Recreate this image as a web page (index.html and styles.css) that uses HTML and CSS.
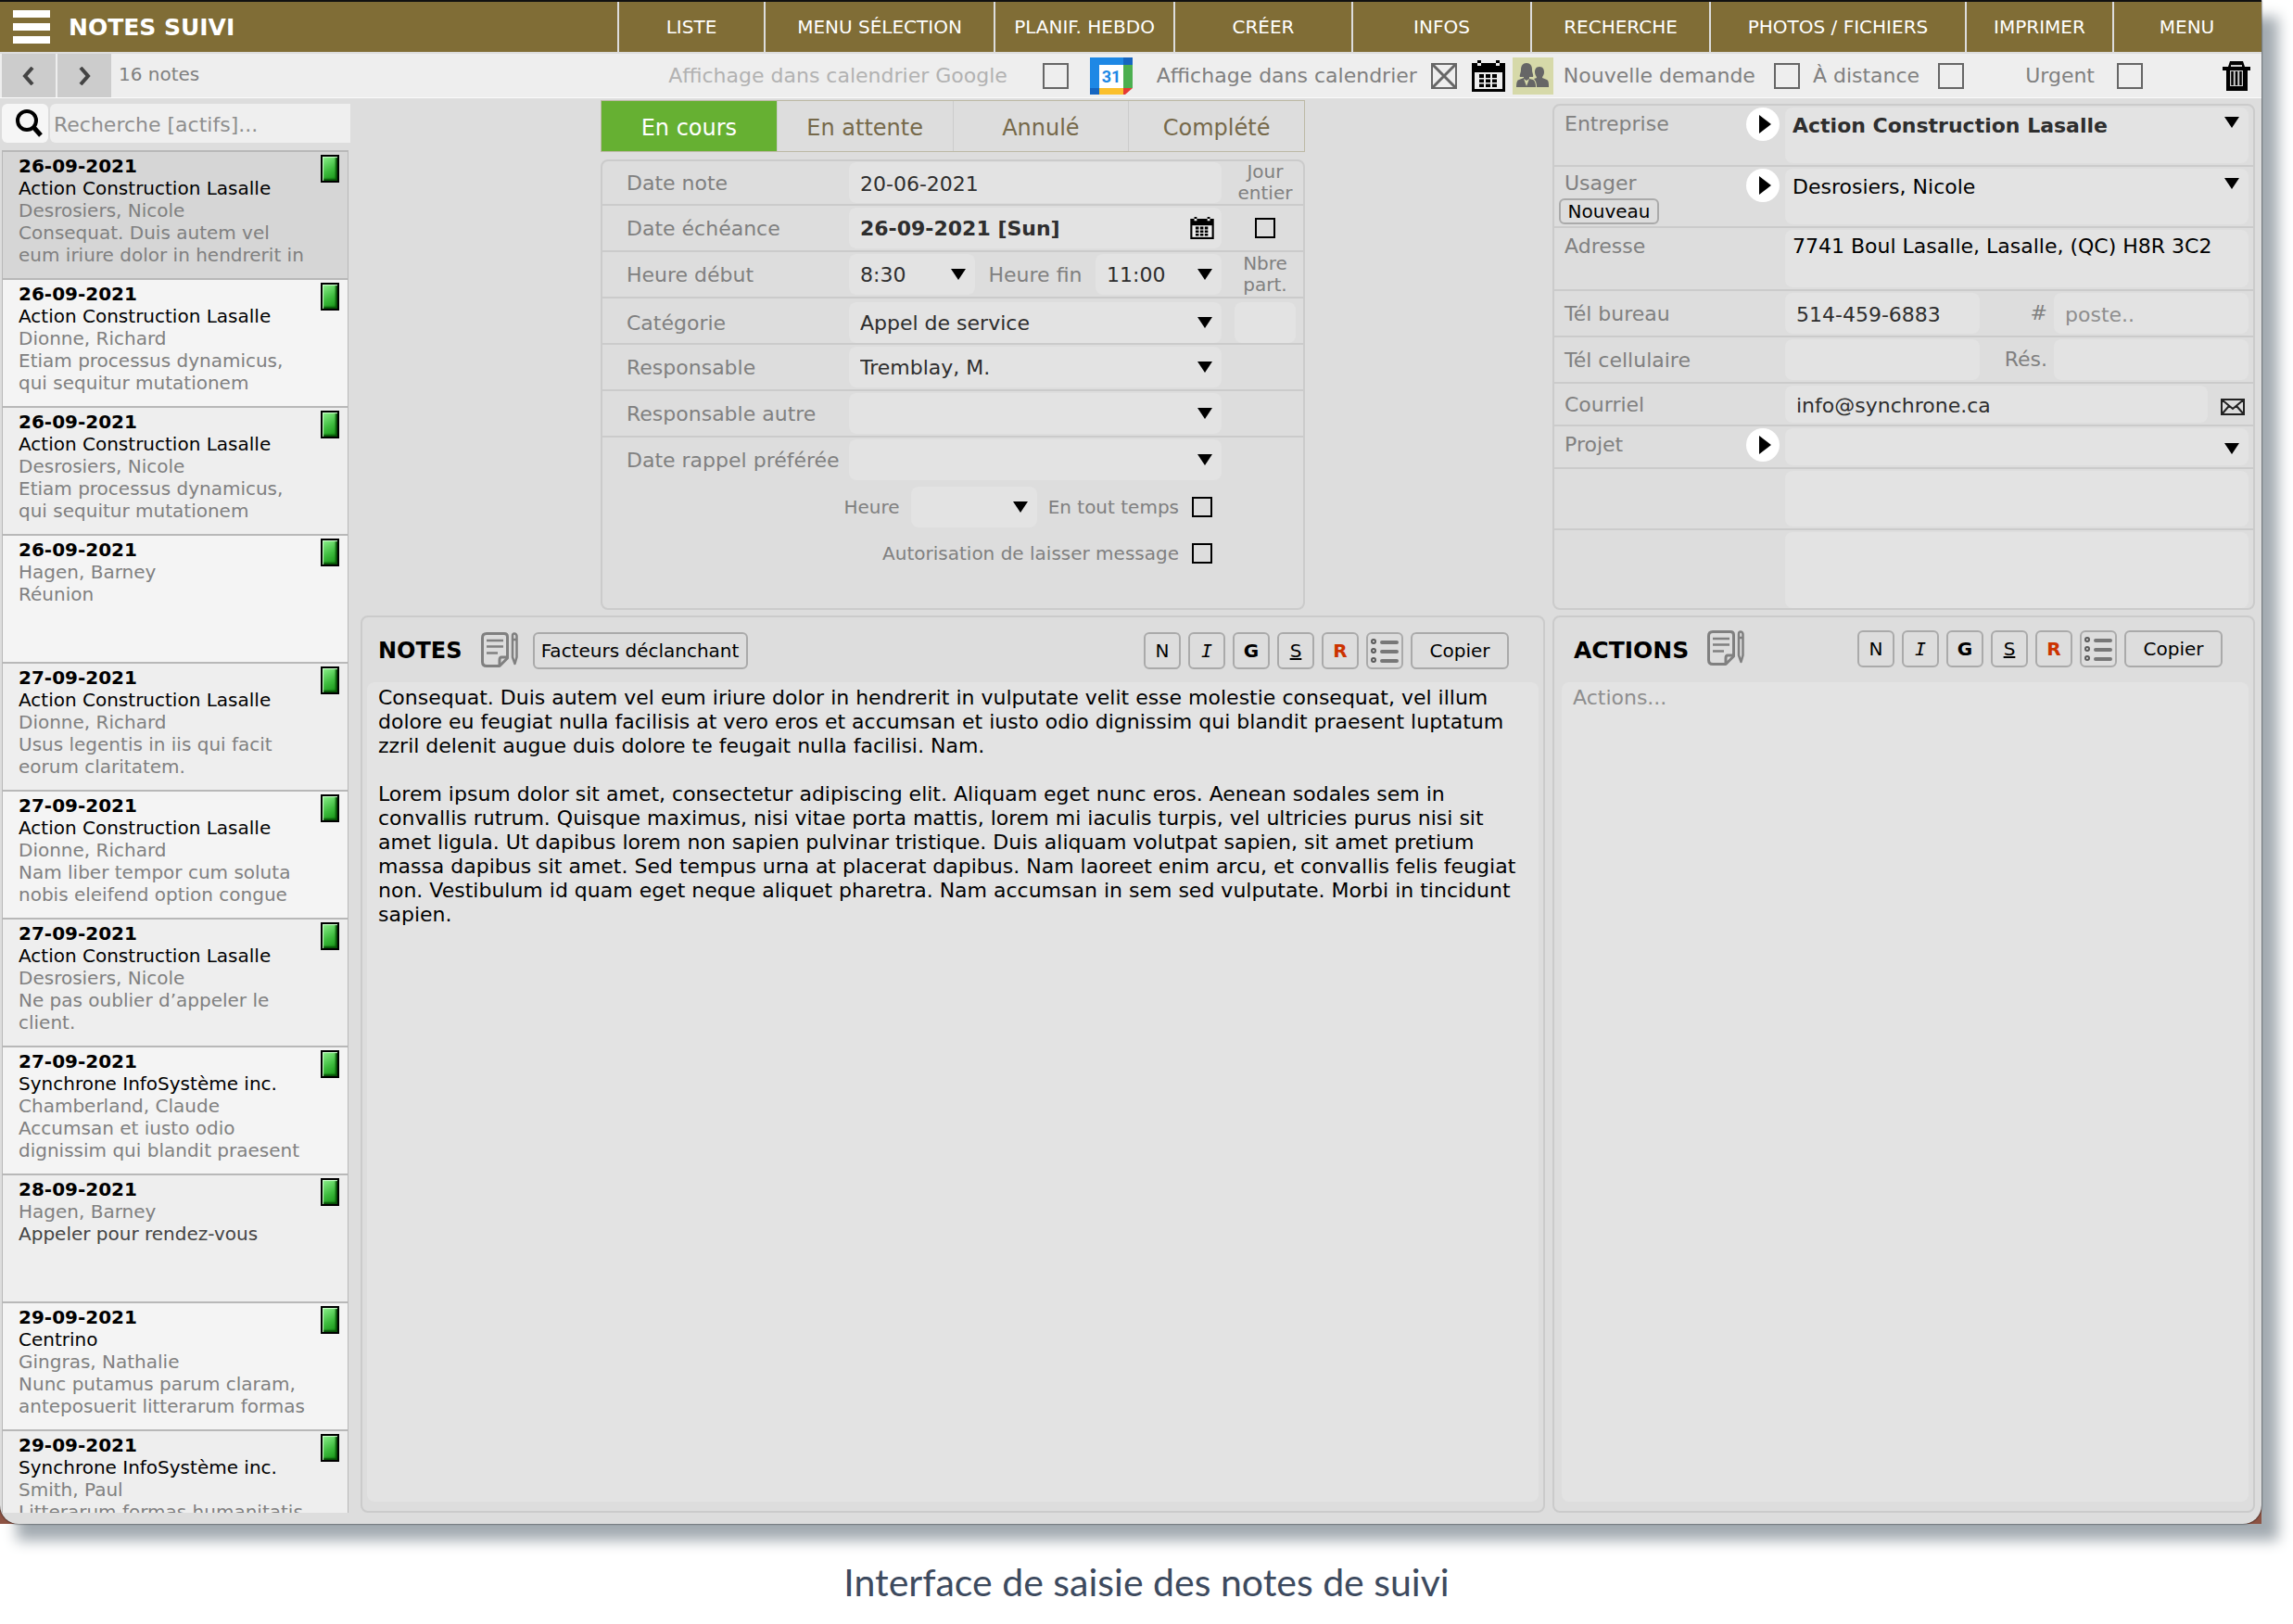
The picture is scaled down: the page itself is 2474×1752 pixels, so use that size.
FILE: index.html
```html
<!DOCTYPE html>
<html lang="fr">
<head>
<meta charset="utf-8">
<title>Notes suivi</title>
<meta name="viewport" content="width=device-width, initial-scale=1">
<link rel="stylesheet" href="styles.css">
</head>
<body>
<svg class="sprite" aria-hidden="true">
  <symbol id="i-note" viewBox="0 0 40 38">
    <g fill="none" stroke="#808080" stroke-width="3" stroke-linejoin="round">
      <path d="M6 1.500H25Q28.500 1.500 28.500 5V28L20 36.500H6Q1.500 36.500 1.500 32V6Q1.500 1.500 6 1.500Z"/>
      <path d="M28 27H22Q20 27 20 30V36" />
      <path d="M34 4Q34 1.500 36 1.500T38.500 4V27L36.500 34L34 27ZM34 8H38" stroke-width="2.500"/>
    </g>
    <path d="M6 9H24M6 15.500H24M6 22.500H18" stroke="#808080" stroke-width="2.500"/>
  </symbol>
  <symbol id="i-list" viewBox="0 0 32 28">
    <g fill="none" stroke="#5a5a5a" stroke-width="2"><circle cx="4" cy="4" r="2"/><circle cx="4" cy="14" r="2"/><circle cx="4" cy="24" r="2"/></g>
    <path d="M13 5H29M13 15H29M13 25H29" stroke="#777" stroke-width="4" stroke-linecap="round"/>
  </symbol>
  <symbol id="i-cal" viewBox="0 0 36 34">
    <path d="M0 3H6V0H10V3H26V0H30V3H36V34H0Z"/>
    <path d="M3 13H33V31H3Z" fill="#eee"/>
    <path d="M6 3H10V6H6ZM26 3H30V6H26Z" fill="#eee"/>
    <path d="M8 15H13V19H8ZM15 15H20V19H15ZM22 15H27V19H22ZM8 20.500H13V24H8ZM15 20.500H20V24H15ZM22 20.500H27V24H22ZM8 25.500H13V29H8ZM15 25.500H20V29H15ZM22 25.500H27V29H22Z"/>
  </symbol>
  <symbol id="i-play" viewBox="0 0 36 36"><circle cx="18" cy="18" r="18" fill="#fff"/><path d="M14 8L27 18L14 28Z"/></symbol>
</svg>

<div class="stage">
<div class="window">
  <header class="topbar">
    <div class="brand">
      <button class="burger" aria-label="Menu principal"><i></i><i></i><i></i></button>
      <h1>NOTES SUIVI</h1>
    </div>
    <a href="#">LISTE</a>
    <a href="#">MENU SÉLECTION</a>
    <a href="#">PLANIF. HEBDO</a>
    <a href="#">CRÉER</a>
    <a href="#">INFOS</a>
    <a href="#">RECHERCHE</a>
    <a href="#">PHOTOS / FICHIERS</a>
    <a href="#">IMPRIMER</a>
    <a href="#">MENU</a>
  </header>

  <div class="toolbar">
    <button class="step" aria-label="Précédent"><svg width="14" height="20" viewBox="0 0 14 20"><path d="M11 1L3 10L11 19" fill="none" stroke="#444" stroke-width="4"/></svg></button>
    <button class="step" aria-label="Suivant"><svg width="14" height="20" viewBox="0 0 14 20"><path d="M3 1L11 10L3 19" fill="none" stroke="#444" stroke-width="4"/></svg></button>
    <span class="count">16 notes</span>
    <label class="opt opt-google">Affichage dans calendrier Google <input type="checkbox" class="box"></label>
    <svg class="gcal" width="46" height="40" viewBox="0 0 46 40">
      <path d="M0 0H36V8H10V33H0Z" fill="#1e88e5"/><path d="M36 0H46V8H36ZM0 33H10V40H0Z" fill="#1565c0"/>
      <path d="M36 8H46V33H36Z" fill="#4caf50"/><path d="M10 33H36V40H10Z" fill="#fbc02d"/><path d="M36 33H46L38 40H36Z" fill="#e53935"/>
      <path d="M10 8H36V33H10Z" fill="#fff"/>
      <text x="23" y="27" text-anchor="middle" class="gcal-day">31</text>
    </svg>
    <label class="opt opt-cal">Affichage dans calendrier <input type="checkbox" class="box" checked></label>
    <svg class="cal" width="36" height="34"><use href="#i-cal"/></svg>
    <button class="people" aria-label="Participants">
      <svg width="36" height="27" viewBox="0 0 36 27" fill="#666">
        <path d="M11 0C15 0 17 3 17 7C17 11 19 13 18 15H14V17L18 18C20 19 21 22 21 26H0C0 21 1 18 3 18L8 16V15H4C3 13 5 11 5 7C5 3 7 0 11 0Z"/>
        <path d="M25 4C29 4 30 7 30 10C30 13 28 14 28 16L33 18C35 19 35 22 35 26H22C22 22 21 19 19 17L22 16C22 14 20 13 20 10C20 7 21 4 25 4Z"/>
        <path d="M8 17L11 25L14 17L11 19Z" fill="#d6d9a9"/>
      </svg>
    </button>
    <label class="opt opt-new">Nouvelle demande <input type="checkbox" class="box"></label>
    <label class="opt opt-remote">À distance <input type="checkbox" class="box"></label>
    <label class="opt opt-urgent">Urgent <input type="checkbox" class="box"></label>
    <button class="trash" aria-label="Supprimer">
      <svg width="30" height="32" viewBox="0 0 30 32"><path d="M8 0H22L24 6H30V10H27V32H4V10H0V6H6Z"/><path d="M9 4H21V6H9ZM8 10H22V27H8Z" fill="#ccc"/><path d="M10.500 11V26M15 11V26M19.500 11V26" stroke="#000" stroke-width="2.500"/></svg>
    </button>
  </div>

  <main class="main">
    <aside class="side">
      <label class="search">
        <span class="search-icon"><svg width="30" height="30" viewBox="0 0 30 30" fill="none" stroke="#000"><circle cx="12" cy="12" r="10" stroke-width="4"/><path d="M19 19L27 28" stroke-width="5"/></svg></span>
        <input type="search" placeholder="Recherche [actifs]..." aria-label="Recherche">
      </label>
      <ul class="list">
        <li class="selected"><i class="flag"></i><b>26-09-2021</b><span class="co">Action Construction Lasalle</span><span>Desrosiers, Nicole</span><p>Consequat. Duis autem vel eum iriure dolor in hendrerit in</p></li>
        <li><i class="flag"></i><b>26-09-2021</b><span class="co">Action Construction Lasalle</span><span>Dionne, Richard</span><p>Etiam processus dynamicus, qui sequitur mutationem</p></li>
        <li><i class="flag"></i><b>26-09-2021</b><span class="co">Action Construction Lasalle</span><span>Desrosiers, Nicole</span><p>Etiam processus dynamicus, qui sequitur mutationem</p></li>
        <li><i class="flag"></i><b>26-09-2021</b><span>Hagen, Barney</span><p>Réunion</p></li>
        <li><i class="flag"></i><b>27-09-2021</b><span class="co">Action Construction Lasalle</span><span>Dionne, Richard</span><p>Usus legentis in iis qui facit eorum claritatem.</p></li>
        <li><i class="flag"></i><b>27-09-2021</b><span class="co">Action Construction Lasalle</span><span>Dionne, Richard</span><p>Nam liber tempor cum soluta nobis eleifend option congue</p></li>
        <li><i class="flag"></i><b>27-09-2021</b><span class="co">Action Construction Lasalle</span><span>Desrosiers, Nicole</span><p>Ne pas oublier d’appeler le client.</p></li>
        <li><i class="flag"></i><b>27-09-2021</b><span class="co">Synchrone InfoSystème inc.</span><span>Chamberland, Claude</span><p>Accumsan et iusto odio dignissim qui blandit praesent</p></li>
        <li><i class="flag"></i><b>28-09-2021</b><span>Hagen, Barney</span><p class="dark">Appeler pour rendez-vous</p></li>
        <li><i class="flag"></i><b>29-09-2021</b><span class="co">Centrino</span><span>Gingras, Nathalie</span><p>Nunc putamus parum claram, anteposuerit litterarum formas</p></li>
        <li><i class="flag"></i><b>29-09-2021</b><span class="co">Synchrone InfoSystème inc.</span><span>Smith, Paul</span><p>Litterarum formas humanitatis</p></li>
      </ul>
    </aside>

    <div class="content">
      <section class="followup">
        <div class="tabs">
          <button class="on">En cours</button><button>En attente</button><button>Annulé</button><button>Complété</button>
        </div>
        <form class="panel form">
          <div class="row first">
            <label for="dn">Date note</label>
            <input id="dn" class="field" value="20-06-2021">
            <label class="side-note" for="je">Jour<br>entier</label>
          </div>
          <div class="row">
            <label for="de">Date échéance</label>
            <div class="field due"><input id="de" value="26-09-2021 [Sun]"><svg width="26" height="24"><use href="#i-cal"/></svg></div>
            <input id="je" type="checkbox" class="box small">
          </div>
          <div class="row">
            <label for="hd">Heure début</label>
            <div class="times">
              <select id="hd" class="field time"><option>8:30</option></select>
              <label for="hf">Heure fin</label>
              <select id="hf" class="field time"><option>11:00</option></select>
            </div>
            <label class="side-note" for="nb">Nbre<br>part.</label>
          </div>
          <div class="row low">
            <label for="ca">Catégorie</label>
            <select id="ca" class="field"><option>Appel de service</option></select>
            <input id="nb" class="field part">
          </div>
          <div class="row">
            <label for="re">Responsable</label>
            <select id="re" class="field"><option>Tremblay, M.</option></select>
          </div>
          <div class="row">
            <label for="ra">Responsable autre</label>
            <select id="ra" class="field"><option></option></select>
          </div>
          <div class="row bare">
            <label for="dr">Date rappel préférée</label>
            <select id="dr" class="field"><option></option></select>
          </div>
          <div class="sub">
            <label for="he">Heure</label>
            <select id="he" class="field time"><option></option></select>
            <label class="check">En tout temps <input type="checkbox" class="box small"></label>
          </div>
          <div class="sub">
            <label class="check">Autorisation de laisser message <input type="checkbox" class="box small"></label>
          </div>
        </form>
      </section>

      <form class="panel client">
        <div class="crow">
          <div class="cap"><label for="en">Entreprise</label><button type="button" class="go" aria-label="Ouvrir l’entreprise"><svg width="36" height="36"><use href="#i-play"/></svg></button></div>
          <select id="en" class="field tall strong"><option>Action Construction Lasalle</option></select>
        </div>
        <div class="crow">
          <div class="cap"><div class="user"><label for="us">Usager</label><button type="button" class="btn new">Nouveau</button></div><button type="button" class="go" aria-label="Ouvrir l’usager"><svg width="36" height="36"><use href="#i-play"/></svg></button></div>
          <select id="us" class="field tall"><option>Desrosiers, Nicole</option></select>
        </div>
        <div class="crow">
          <div class="cap"><label for="ad">Adresse</label></div>
          <textarea id="ad" class="field address">7741 Boul Lasalle, Lasalle, (QC) H8R 3C2</textarea>
        </div>
        <div class="crow">
          <div class="cap mid"><label for="tb">Tél bureau</label></div>
          <div class="pair"><input id="tb" class="field" value="514-459-6883"><label for="po">#</label><input id="po" class="field" placeholder="poste.."></div>
        </div>
        <div class="crow">
          <div class="cap mid"><label for="tc">Tél cellulaire</label></div>
          <div class="pair"><input id="tc" class="field"><label for="rs">Rés.</label><input id="rs" class="field"></div>
        </div>
        <div class="crow">
          <div class="cap mid"><label for="co">Courriel</label></div>
          <div class="mail"><input id="co" class="field short" type="email" value="info@synchrone.ca">
            <button type="button" class="send" aria-label="Envoyer un courriel"><svg width="26" height="18" viewBox="0 0 26 18" fill="none" stroke="#222" stroke-width="2"><path d="M1 1H25V17H1ZM1 1L13 11L25 1M1 17L9 8M25 17L17 8"/></svg></button></div>
        </div>
        <div class="crow">
          <div class="cap"><label for="pr">Projet</label><button type="button" class="go" aria-label="Ouvrir le projet"><svg width="36" height="36"><use href="#i-play"/></svg></button></div>
          <select id="pr" class="field short project"><option></option></select>
        </div>
        <div class="crow"><div class="cap"></div><textarea class="field extra" aria-label="Complément 1"></textarea></div>
        <div class="crow"><div class="cap"></div><textarea class="field extra last" aria-label="Complément 2"></textarea></div>
      </form>

      <section class="panel editor">
        <div class="head">
          <h2><label for="notes">NOTES</label></h2>
          <svg width="40" height="38"><use href="#i-note"/></svg>
          <button class="btn factors">Facteurs déclanchant</button>
          <div class="tools">
            <button class="btn sq">N</button><button class="btn sq it">I</button><button class="btn sq bd">G</button><button class="btn sq un">S</button><button class="btn sq red">R</button><button class="btn sq" aria-label="Liste"><svg width="32" height="28"><use href="#i-list"/></svg></button><button class="btn copy">Copier</button>
          </div>
        </div>
        <textarea id="notes" class="field text">Consequat. Duis autem vel eum iriure dolor in hendrerit in vulputate velit esse molestie consequat, vel illum dolore eu feugiat nulla facilisis at vero eros et accumsan et iusto odio dignissim qui blandit praesent luptatum zzril delenit augue duis dolore te feugait nulla facilisi. Nam.

Lorem ipsum dolor sit amet, consectetur adipiscing elit. Aliquam eget nunc eros. Aenean sodales sem in convallis rutrum. Quisque maximus, nisi vitae porta mattis, lorem mi iaculis turpis, vel ultricies purus nisi sit amet ligula. Ut dapibus lorem non sapien pulvinar tristique. Duis aliquam volutpat sapien, sit amet pretium massa dapibus sit amet. Sed tempus urna at placerat dapibus. Nam laoreet enim arcu, et convallis felis feugiat non. Vestibulum id quam eget neque aliquet pharetra. Nam accumsan in sem sed vulputate. Morbi in tincidunt sapien.</textarea>
      </section>

      <section class="panel editor actions">
        <div class="head">
          <h2><label for="actions">ACTIONS</label></h2>
          <svg width="40" height="38"><use href="#i-note"/></svg>
          <div class="tools">
            <button class="btn sq">N</button><button class="btn sq it">I</button><button class="btn sq bd">G</button><button class="btn sq un">S</button><button class="btn sq red">R</button><button class="btn sq" aria-label="Liste"><svg width="32" height="28"><use href="#i-list"/></svg></button><button class="btn copy">Copier</button>
          </div>
        </div>
        <textarea id="actions" class="field text" placeholder="Actions..."></textarea>
      </section>
    </div>
  </main>
</div>
</div>
<p class="caption">Interface de saisie des notes de suivi</p>
</body>
</html>
```
FILE: styles.css
```css
* { box-sizing: border-box; }

body {
  margin: 0;
  height: 100vh;
  display: flex;
  flex-direction: column;
  background: #fff;
  color: #000;
  font: 22px/26px Verdana, "DejaVu Sans", sans-serif;
  overflow: hidden;
}

button, input, select, textarea { font: inherit; color: inherit; margin: 0; padding: 0; border: 0; background: none; border-radius: 0; }
button { cursor: pointer; }
h1, h2, p, ul { margin: 0; padding: 0; }
svg { display: block; flex: none; }
.sprite { position: absolute; width: 0; height: 0; }

/* Window and its drop shadow */
.stage {
  flex: 1;
  min-height: 0;
  margin-right: 34px;
  display: flex;
  background: #8d5343;
  box-shadow: 18px 18px 14px #a3abb1;
}
.window {
  flex: 1;
  min-width: 0;
  display: flex;
  flex-direction: column;
  background: #ddd;
  border-radius: 0 0 20px 20px;
  box-shadow: 0 0 2px #000;
  overflow: hidden;
}
.caption {
  height: 108px;
  padding-top: 39px;
  text-align: center;
  font: 41px/48px Lato, sans-serif;
  color: #3d4a5e;
}

/* Top bar */
.topbar {
  display: grid;
  grid-template-columns: 666fr 158fr 248fr 194fr 192fr 193fr 193fr 276fr 159fr 159fr;
  height: 56px;
  flex: none;
  padding: 0 2px 0 0;
  border-top: 2px solid #111;
  background: #806d36;
  color: #fff;
  font-size: 20px;
}
.topbar a {
  display: flex;
  align-items: center;
  justify-content: center;
  border-left: 2px solid #ddd;
  color: #fff;
  text-decoration: none;
  white-space: nowrap;
}
.brand { display: flex; align-items: center; gap: 20px; padding-left: 14px; }
.brand h1 { font-size: 25px; padding-top: 2px; }
.burger { display: grid; gap: 6px; width: 40px; }
.burger i { height: 8px; background: #fff; }

/* Toolbar */
.toolbar {
  display: flex;
  align-items: center;
  flex: none;
  height: 50px;
  padding: 0 12px 0 2px;
  border-top: 2px solid #ddd;
  border-bottom: 1px solid #fafafa;
  background: #eee;
  color: #808080;
}
.step {
  align-self: stretch;
  display: grid;
  place-items: center;
  width: 58px;
  margin-right: 2px;
  background: #ccc;
}
.count { margin-left: 6px; padding-bottom: 4px; font-size: 20px; }
.opt { display: flex; align-items: center; gap: 20px; white-space: nowrap; }
.opt-google { margin-left: auto; gap: 38px; color: #b2b2b2; }
.gcal { margin: 0 26px 0 23px; }
.gcal-day { font: bold 18px Roboto, sans-serif; fill: #1e88e5; }
.opt-cal { gap: 15px; }
.cal { margin: 0 8px 0 16px; }
.people { display: grid; place-items: center; width: 44px; height: 40px; background: #d6d9a9; margin-right: 11px; }
.opt-new { margin-right: 14px; }
.opt-remote { margin-right: 66px; }
.opt-urgent { gap: 24px; margin-right: 86px; }

.box {
  appearance: none;
  flex: none;
  width: 28px;
  height: 28px;
  border: 2px solid #666;
}
.box:checked {
  background: url("data:image/svg+xml,%3Csvg xmlns='http://www.w3.org/2000/svg' viewBox='0 0 24 24'%3E%3Cpath d='M0 0L24 24M24 0L0 24' stroke='%23666' stroke-width='3'/%3E%3C/svg%3E");
}
.box.small { width: 22px; height: 22px; border-color: #000; }

.main { flex: 1; min-height: 0; display: flex; }

/* Notes list */
.side { display: flex; flex-direction: column; width: 378px; flex: none; padding: 6px 0 12px 2px; }
.search { display: flex; height: 42px; flex: none; margin-bottom: 8px; gap: 2px; }
.search-icon { display: grid; place-items: center; width: 50px; background: #f6f6f6; border-radius: 6px; padding-left: 10px; }
.search input { flex: 1; min-width: 0; padding: 4px 4px 0; background: #efefef; border-radius: 6px 0 0 6px; outline: 0; }
::placeholder { color: #8e8e8e; opacity: 1; }
.list {
  flex: 1;
  min-height: 0;
  margin-right: 2px;
  overflow: hidden;
  list-style: none;
  border: solid #b8b8b8;
  border-width: 0 1px;
  font-size: 20px;
  line-height: 24px;
}
.list li {
  height: 138px;
  padding: 3px 9px 0 17px;
  border-top: 2px solid #b8b8b8;
  background: #f4f4f4;
  color: #808080;
}
.list li:nth-child(odd) { background: #eee; }
.list .selected:nth-child(odd) { background: #d6d6d6; }
.list b, .list span { display: block; }
.list b, .list .co { color: #000; }
.list p { max-width: 317px; }
.list .dark { color: #444; }
.flag {
  float: right;
  width: 20px;
  height: 30px;
  border: 2px solid #000;
  background: linear-gradient(150deg, #8cf08c, #3dbb3d 55%, #129012);
  box-shadow: inset 1px 1px 1px #d0ffd0, inset -2px -2px 2px #064d06;
}

/* Work area */
.content {
  flex: 1;
  min-width: 0;
  display: grid;
  grid-template-columns: minmax(0, 1278fr) minmax(0, 758fr);
  grid-template-rows: auto minmax(0, 1fr);
  gap: 6px 8px;
  padding: 0 7px 12px 11px;
}
.panel { border: 2px solid #cbcbcb; border-radius: 8px; }
.field {
  width: 100%;
  height: 44px;
  min-width: 0;
  padding: 2px 12px 0;
  border-radius: 8px;
  background: #e3e3e3;
  color: #2e2e2e;
  outline: 0;
  resize: none;
}
select.field {
  appearance: none;
  background: #e3e3e3 url("data:image/svg+xml,%3Csvg xmlns='http://www.w3.org/2000/svg' width='16' height='12'%3E%3Cpath d='M0 0H16L8 12Z'/%3E%3C/svg%3E") no-repeat right 10px center;
}

.followup { display: flex; flex-direction: column; gap: 8px; width: 760px; max-width: 100%; margin: 0 auto; padding-top: 2px; }
.tabs { display: flex; height: 56px; border: 1px solid #bdb9a6; }
.tabs button { flex: 1; padding-top: 3px; border-left: 1px solid #ccc; color: #76694a; font-size: 24px; }
.tabs .on { background: #66b032; color: #fff; border-left: 0; }

.form { flex: 1; color: #808080; }
.row {
  display: grid;
  grid-template-columns: 240px minmax(0, 1fr) 80px;
  align-items: center;
  height: 50px;
  padding: 0 8px 0 26px;
  border-bottom: 2px solid #cbcbcb;
}
.row.first { height: 48px; }
.row.low { align-items: end; }
.row.low label { line-height: 42px; }
.row.bare { border-color: transparent; }
.row label { padding-top: 2px; white-space: nowrap; }
.row > :nth-child(3) { justify-self: end; }
.row .side-note { width: 62px; margin-right: 2px; padding-top: 0; text-align: center; font-size: 20px; line-height: 23px; }
.row .part { width: 66px; }
.row .box { margin-right: 22px; }
.due { display: flex; align-items: center; padding-right: 8px; padding-top: 0; }
.due input { flex: 1; min-width: 0; padding-top: 2px; font-weight: bold; outline: 0; }
.times { display: flex; align-items: center; justify-content: space-between; }
.field.time { width: 136px; flex: none; }
.sub {
  display: flex;
  align-items: center;
  justify-content: flex-end;
  gap: 12px;
  height: 50px;
  padding-right: 98px;
  font-size: 20px;
}
.check { display: flex; align-items: center; gap: 14px; }

/* Client card */
.client { margin-top: 6px; color: #808080; }
.crow {
  display: grid;
  grid-template-columns: 249px minmax(0, 1fr);
  padding: 2px 5px 2px 0;
  border-bottom: 2px solid #cbcbcb;
}
.crow:last-child { border-bottom: 0; padding-bottom: 0; }
.cap { display: flex; justify-content: space-between; align-items: flex-start; padding: 0 6px 0 11px; line-height: 36px; }
.cap.mid { align-items: center; padding-top: 2px; }
.user { display: flex; flex-direction: column; line-height: 32px; }
.new { width: 108px; height: 28px; margin-left: -6px; font-size: 18px; }
.tall { height: 60px; padding: 0 8px 20px; color: #000; }
select.tall { background-position: right 10px top 10px; }
.strong { font-weight: bold; color: #2e2e2e; }
.address { height: 62px; padding: 5px 8px; color: #000; display: block; }
.pair { display: grid; grid-template-columns: 210px minmax(0, 1fr) 210px; align-items: center; }
.pair label { text-align: right; padding-right: 7px; }
.short { height: 40px; }
select.project { background-position: right 10px top 16px; }
.mail { display: flex; align-items: center; gap: 14px; padding-right: 4px; }
.send { padding-top: 6px; }
.extra { height: 60px; display: block; }
.extra.last { height: 82px; }

/* Editors */
.editor { display: flex; flex-direction: column; padding: 0 5px 10px; }
.head { display: flex; align-items: flex-start; height: 70px; flex: none; padding: 16px 32px 0 12px; }
.head h2 { font-size: 24px; line-height: 40px; margin-right: 20px; }
.btn {
  border: 2px solid #aaa;
  border-radius: 6px;
  color: #000;
  font-size: 20px;
  line-height: 24px;
}
.head svg { margin-right: 16px; }
.head .btn svg { margin: 0 auto; }
.head .btn { height: 40px; }
.factors { width: 232px; }
.tools { display: flex; gap: 8px; margin-left: auto; }
.sq { width: 40px; }
.it { font-family: "DejaVu Sans Mono", monospace; font-style: italic; }
.bd, .red { font-weight: bold; }
.un { text-decoration: underline; }
.head .red { color: #cc3300; }
.copy { width: 106px; }
.text { flex: 1; padding: 4px 12px; color: #000; }
.actions { padding-left: 8px; }
.actions .head { padding: 14px 28px 0 13px; }
.actions .head h2 { font-size: 25px; line-height: 44px; }
```
